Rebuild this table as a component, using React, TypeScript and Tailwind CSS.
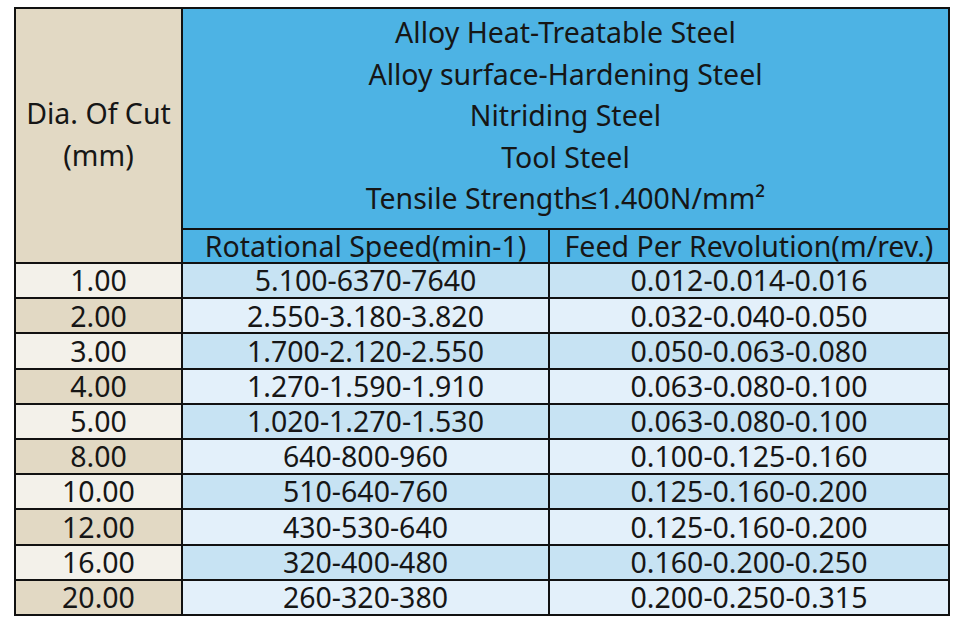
const rows = [
  ['1.00', '5.100-6370-7640', '0.012-0.014-0.016'],
  ['2.00', '2.550-3.180-3.820', '0.032-0.040-0.050'],
  ['3.00', '1.700-2.120-2.550', '0.050-0.063-0.080'],
  ['4.00', '1.270-1.590-1.910', '0.063-0.080-0.100'],
  ['5.00', '1.020-1.270-1.530', '0.063-0.080-0.100'],
  ['8.00', '640-800-960', '0.100-0.125-0.160'],
  ['10.00', '510-640-760', '0.125-0.160-0.200'],
  ['12.00', '430-530-640', '0.125-0.160-0.200'],
  ['16.00', '320-400-480', '0.160-0.200-0.250'],
  ['20.00', '260-320-380', '0.200-0.250-0.315'],
];

const materials = [
  'Alloy Heat-Treatable Steel',
  'Alloy surface-Hardening Steel',
  'Nitriding Steel',
  'Tool Steel',
  'Tensile Strength≤1.400N/mm²',
];

export default function App() {
  return (
    <div className="w-[960px] h-[621px] bg-white pt-[7px] pl-[14px] text-[#161616] [font-family:'Noto_Sans',sans-serif]">
      <table className="w-[934px] table-fixed border-collapse border-2 border-[#111] text-[28.5px] leading-none text-center">
        <colgroup>
          <col className="w-[167px]" />
          <col className="w-[367px]" />
          <col className="w-[400px]" />
        </colgroup>
        <thead>
          <tr className="h-[221px]">
            <th rowSpan={2} className="border-2 border-[#111] bg-[#e2d9c4] font-normal leading-[42px] pb-[3px]">
              Dia. Of Cut
              <br />
              (mm)
            </th>
            <th colSpan={2} className="border-2 border-[#111] bg-[#4db3e4] font-normal leading-[41.5px] pb-[5px]">
              {materials.map((m) => (
                <div key={m}>{m}</div>
              ))}
            </th>
          </tr>
          <tr className="h-[34px]">
            <th className="border-2 border-[#111] bg-[#4db3e4] font-normal">Rotational Speed(min-1)</th>
            <th className="border-2 border-[#111] bg-[#4db3e4] font-normal">Feed Per Revolution(m/rev.)</th>
          </tr>
        </thead>
        <tbody>
          {rows.map(([dia, speed, feed], i) => (
            <tr key={dia} className="h-[35.2px]">
              <td className={`border-2 border-[#111] ${i % 2 === 0 ? 'bg-[#f3f1ea]' : 'bg-[#e2d9c4]'}`}>{dia}</td>
              <td className={`border-2 border-[#111] ${i % 2 === 0 ? 'bg-[#c7e3f3]' : 'bg-[#e3f0fa]'}`}>{speed}</td>
              <td className={`border-2 border-[#111] ${i % 2 === 0 ? 'bg-[#c7e3f3]' : 'bg-[#e3f0fa]'}`}>{feed}</td>
            </tr>
          ))}
        </tbody>
      </table>
    </div>
  );
}
